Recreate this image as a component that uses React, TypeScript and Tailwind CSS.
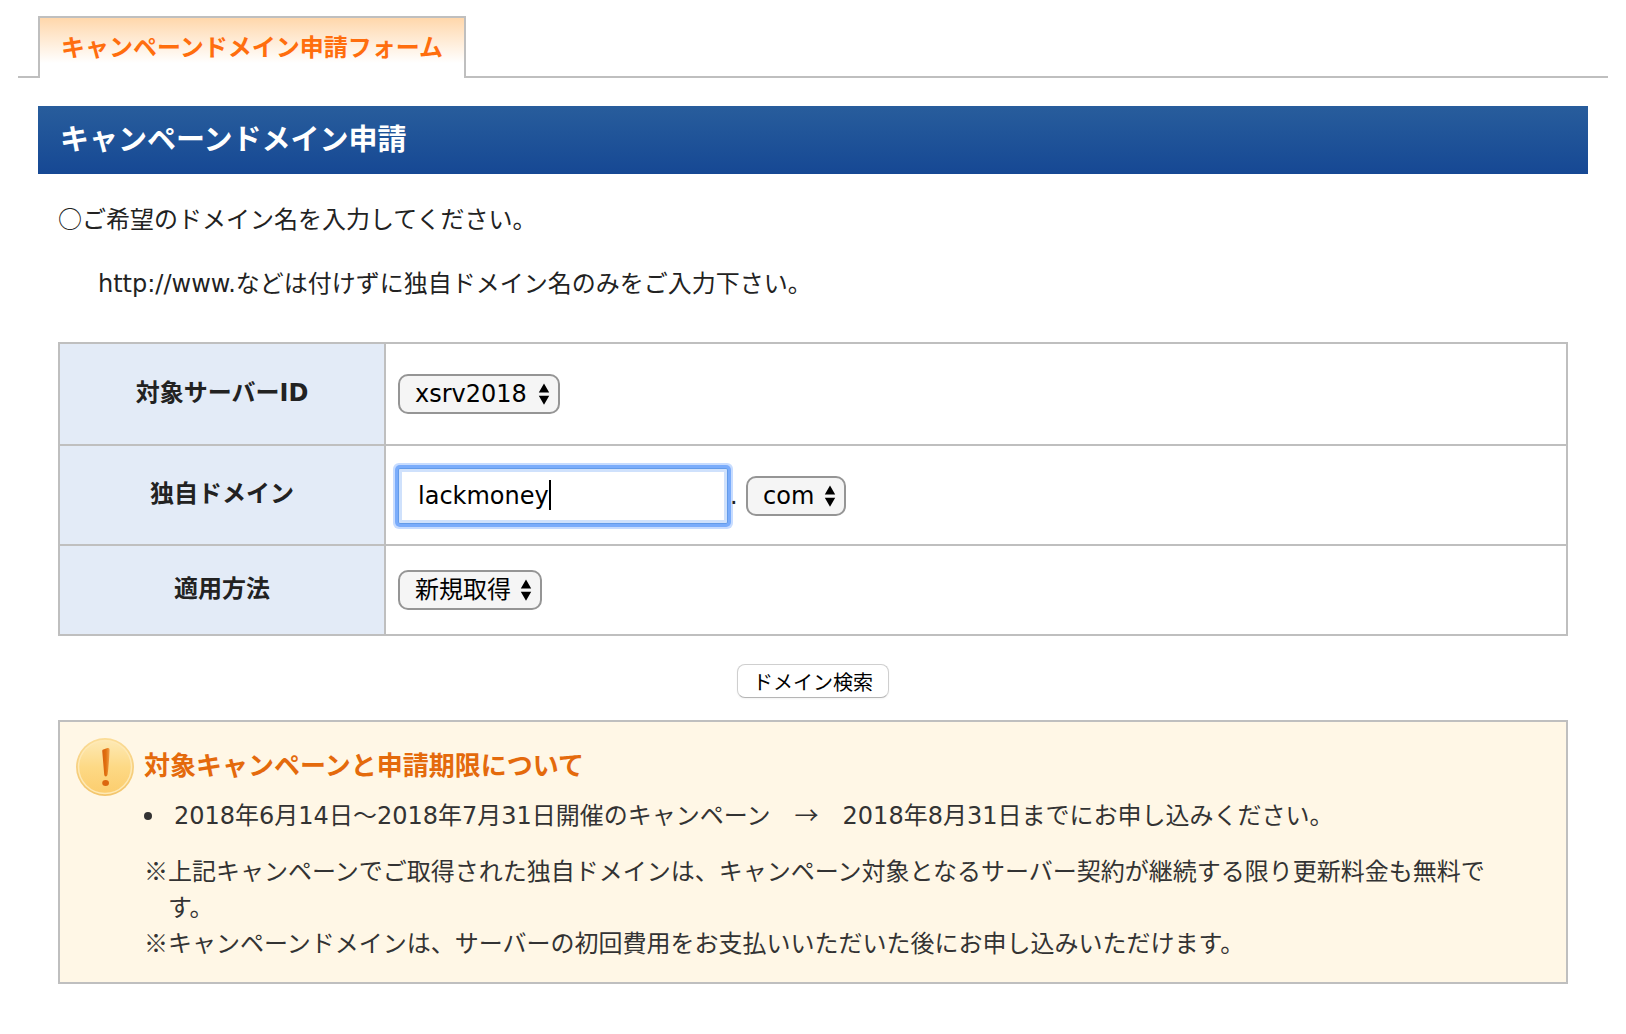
import { useState } from 'react';
import type { ReactNode, SelectHTMLAttributes } from 'react';

const servers = ['xsrv2018'];
const tlds = ['com', 'net', 'org', 'info', 'biz'];
const methods = ['新規取得', '移管'];

// Full-width symbols that DejaVu would otherwise draw narrower
function Wide({ children }: { children: ReactNode }) {
  return (
    <span className="font-['Noto_Sans_CJK_JP',sans-serif] leading-none">{children}</span>
  );
}

function SelectBox({
  options,
  className,
  ...props
}: SelectHTMLAttributes<HTMLSelectElement> & { options: string[] }) {
  return (
    <span className="relative inline-flex">
      <select
        className={`h-10 appearance-none rounded-[10px] border-2 border-[#959595] bg-[#f5f5f5] pl-[15px] text-2xl leading-8 text-black ${className}`}
        {...props}
      >
        {options.map((option) => (
          <option key={option}>{option}</option>
        ))}
      </select>
      <svg
        className="pointer-events-none absolute top-2 right-2.5 h-6 w-3"
        viewBox="0 0 12 24"
        aria-hidden="true"
      >
        <path d="M6 1.5 L11.2 10.5 H0.8 Z M6 22.8 L11.2 13.8 H0.8 Z" fill="#000" />
      </svg>
    </span>
  );
}

function WarningIcon() {
  return (
    <svg className="h-[58px] w-[58px] shrink-0" viewBox="0 0 58 58" aria-hidden="true">
      <defs>
        <linearGradient id="coin" x1="0" y1="0" x2="0" y2="1">
          <stop offset="0" stopColor="#fde9b4" />
          <stop offset="0.5" stopColor="#fdd985" />
          <stop offset="1" stopColor="#fccd6e" />
        </linearGradient>
        <linearGradient id="rim" x1="0" y1="0" x2="0" y2="1">
          <stop offset="0" stopColor="#fbdc96" />
          <stop offset="1" stopColor="#f3c56b" />
        </linearGradient>
        <linearGradient id="mark" x1="0" y1="0" x2="1" y2="0">
          <stop offset="0" stopColor="#d9620f" />
          <stop offset="0.5" stopColor="#e0700f" />
          <stop offset="1" stopColor="#f0a04a" />
        </linearGradient>
      </defs>
      <circle cx="29" cy="29" r="29" fill="url(#rim)" />
      <circle cx="29" cy="29" r="26.5" fill="url(#coin)" stroke="#fee9b5" strokeWidth="1.5" />
      <path
        d="M26.2 12.8 Q26.2 11.5 28 11.2 L31.5 10 Q33.8 9.6 33.6 12 Q33 26 31.6 36.5 Q31.2 38.5 29.8 38.5 Q28.4 38.5 28.2 36.5 Z"
        fill="url(#mark)"
      />
      <ellipse cx="29.6" cy="45" rx="3.4" ry="3" fill="#dc670f" />
    </svg>
  );
}

export default function App() {
  const [domain, setDomain] = useState('lackmoney');
  const [showCaret, setShowCaret] = useState(true);

  return (
    <div className="min-h-screen bg-white px-[18px] pt-4 pb-12 font-['DejaVu_Sans','Noto_Sans_CJK_JP',sans-serif] text-2xl leading-9 text-[#222]">
      {/* Tab */}
      <div className="flex items-end">
        <div className="w-5 border-b-2 border-[#bfbfbf]" />
        <a
          href="#form"
          className="h-[62px] border-2 border-b-0 border-[#bfbfbf] bg-linear-to-b from-[#ffd7ab] to-white to-75% px-[21px] pt-3 font-bold whitespace-nowrap text-[#ff6e0e]"
        >
          キャンペーンドメイン申請フォーム
        </a>
        <div className="flex-1 border-b-2 border-[#bfbfbf]" />
      </div>

      <main id="form" className="px-5 pt-7">
        <h1 className="bg-linear-to-b from-[#285d9c] to-[#164894] px-[22px] py-4 text-[29px] leading-9 font-bold text-white">
          キャンペーンドメイン申請
        </h1>

        <form className="px-5 pt-7" onSubmit={(e) => e.preventDefault()}>
          <p>
            <Wide>○</Wide>ご希望のドメイン名を入力してください。
          </p>
          <p className="mt-7 pl-10">
            http://www.などは付けずに独自ドメイン名のみをご入力下さい。
          </p>

          <table className="mt-10 w-full border-collapse">
            <tbody>
              <tr className="h-[102px]">
                <th className="w-[326px] border-2 border-[#bfbfbf] bg-[#e3ebf7] pb-0.5 font-bold">
                  <label htmlFor="server">対象サーバーID</label>
                </th>
                <td className="border-2 border-[#bfbfbf] px-3">
                  <div className="flex items-center">
                    <SelectBox id="server" options={servers} className="w-[162px]" />
                  </div>
                </td>
              </tr>
              <tr className="h-[100px]">
                <th className="border-2 border-[#bfbfbf] bg-[#e3ebf7] pb-0.5 font-bold">
                  <label htmlFor="domain">独自ドメイン</label>
                </th>
                <td className="border-2 border-[#bfbfbf] px-3 pt-0.5">
                  <div className="flex items-center">
                    <div className="relative">
                      <input
                        id="domain"
                        type="text"
                        value={domain}
                        onChange={(e) => {
                          setDomain(e.target.value);
                          setShowCaret(false);
                        }}
                        className="block h-14 w-[330px] rounded-xs border border-[#639be9] bg-white px-[19px] text-2xl text-black shadow-[inset_0_0_0_3px_#cfe1fc,0_0_0_3px_#7aacfb,0_0_0_5px_#c7dcff] outline-none"
                      />
                      {showCaret && (
                        <span className="pointer-events-none absolute top-3 left-[151px] h-[30px] w-0.5 bg-black" />
                      )}
                    </div>
                    <span className="z-10 ml-0.5 w-4">.</span>
                    <SelectBox options={tlds} className="w-[100px]" aria-label="ドメイン種別" />
                  </div>
                </td>
              </tr>
              <tr className="h-[90px]">
                <th className="border-2 border-[#bfbfbf] bg-[#e3ebf7] pb-0.5 font-bold">
                  <label htmlFor="method">適用方法</label>
                </th>
                <td className="border-2 border-[#bfbfbf] px-3">
                  <div className="flex items-center">
                    <SelectBox id="method" options={methods} className="w-36" />
                  </div>
                </td>
              </tr>
            </tbody>
          </table>

          <div className="mt-7 flex justify-center">
            <button
              type="submit"
              className="h-[34px] rounded-lg border border-[#cfcfcf] border-b-[#b5b5b5] bg-white px-[15px] pt-0.5 text-xl leading-8 text-black shadow-xs"
            >
              ドメイン検索
            </button>
          </div>

          {/* Notice */}
          <section className="mt-[22px] flex border-2 border-[#bfbfbf] bg-[#fff7e6] py-4 pr-[74px] pl-4 text-[#333]">
            <WarningIcon />
            <div className="min-w-0 flex-1 pt-2.5 pb-1 pl-2.5">
              <h2 className="text-[26px] leading-9 font-bold text-[#e46a0c]">
                対象キャンペーンと申請期限について
              </h2>
              <ul className="mt-3.5">
                <li className="flex items-center">
                  <span className="mr-[22px] h-2 w-2 shrink-0 rounded-full bg-[#333]" />
                  <span>
                    2018年6月14日～2018年7月31日開催のキャンペーン　<Wide>→</Wide>　2018年8月31日までにお申し込みください。
                  </span>
                </li>
              </ul>
              <p className="mt-5 pl-6 -indent-6">
                <Wide>※</Wide>上記キャンペーンでご取得された独自ドメインは、キャンペーン対象となるサーバー契約が継続する限り更新料金も無料です。
              </p>
              <p className="pl-6 -indent-6">
                <Wide>※</Wide>キャンペーンドメインは、サーバーの初回費用をお支払いいただいた後にお申し込みいただけます。
              </p>
            </div>
          </section>
        </form>
      </main>
    </div>
  );
}
